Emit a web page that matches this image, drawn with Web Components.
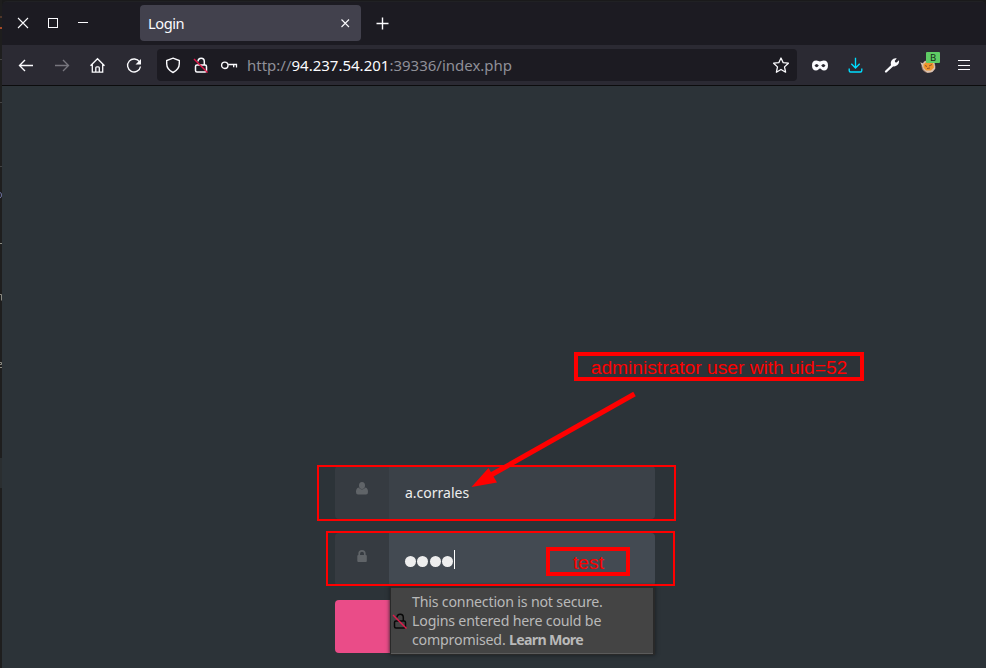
<!DOCTYPE html>
<html lang="en"><head><meta charset="utf-8"><title>Login</title>
<style>html,body{margin:0;width:986px;height:668px;overflow:hidden;background:#1c1c1c;font-family:"Noto Sans","Noto Sans CJK SC",sans-serif}</style>
</head><body><login-desktop></login-desktop>
<script>
const define=(name,css,html)=>customElements.define(name,class extends HTMLElement{
  constructor(){super();this.attachShadow({mode:'open'}).innerHTML='<style>'+css+'</style>'+html;}
});
const glyphs={
 close:'<path d="M3 3l10 10M13 3l-10 10" stroke-width="1.1"/>',
 max:'<path d="M3.5 3.500h9v9h-9z" shape-rendering="crispEdges"/>',
 min:'<path d="M3 7.5h10" shape-rendering="crispEdges"/>',
 tabclose:'<path d="M4.500 4.500l7.500 7.500M12 4.500l-7.500 7.500" stroke-width="1.1"/>',
 plus:'<path d="M8.500 2.500v12M2.500 8.500h12" stroke-width="1.400"/>',
 back:'<path d="M15 8.500H2M7 3L1.500 8.500 7 14" stroke-width="1.350"/>',
 forward:'<path d="M1 8.500h13M9 3l5.500 5.500L9 14" stroke-width="1.350"/>',
 home:'<path d="M.5 8.700L7.500 1.700l7 7M2.300 7.500v7.700h10.400V7.500M5.800 15v-4.200q0-1 1-1h1.500q1 0 1 1V15" stroke-width="1.300"/>',
 reload:'<path d="M13.600 5A6.500 6.500 0 1 0 14.500 9.500" stroke-width="1.400"/><path d="M15 2v5.500H9.500z" fill="currentColor" stroke="none"/>',
 shield:'<path d="M8 1.200l6.300 2.300v3.300c0 4-2.800 7-6.300 8.700-3.500-1.700-6.300-4.700-6.300-8.700V3.500z" stroke-width="1.400"/>',
 lock:'<rect x="2.500" y="8" width="11" height="7" rx="1.500" stroke-width="1.500"/><path d="M5 4.500C5.200 0 11.300 0 11.300 4.500V8" stroke-width="1.500"/><path d="M1 2L14.500 15.500" stroke="#e2194a" stroke-width="1.400"/>',
 key:'<circle cx="3.800" cy="8.300" r="3.200" stroke-width="1.400"/><path d="M7.200 7.500H15.500v3M12.700 7.500v2.800" stroke-width="1.300"/>',
 star:'<path d="M8 1l2.200 4.700 5.200.5-3.900 3.700 1.100 5.300L8 12.500 3.400 15.200l1.100-5.300L.6 6.200 5.800 5.700z" stroke-width="1.300" stroke-linejoin="round"/>',
 mask:'<path fill="currentColor" stroke="none" fill-rule="evenodd" d="M0 8.500C0 5 1.300 3.500 4.300 3.500c1.700 0 2.700 1 3.700 1s2-1 3.700-1c3 0 4.300 1.500 4.300 5 0 3.200-1.500 5-4 5-2.200 0-3-2-4-2s-1.800 2-4 2c-2.500 0-4-1.800-4-5zM2.500 8.600q2.200 3.400 4.300 0-2.200-3-4.300 0zM9.200 8.600q2.200 3.400 4.300 0-2.200-3-4.300 0z"/>',
 download:'<path d="M7.500 .8v10M3.300 6.700L7.500 11l4.200-4.300M1.200 11.500v2q0 1.500 1.300 1.500h10q1.300 0 1.300-1.500v-2" stroke-width="1.350"/>',
 wrench:'<path d="M2 14.500L9 7.800" stroke-width="2.300" stroke-linecap="round"/><path fill="currentColor" stroke="none" d="M7 8C6 4 9 .7 12.700 1.400L10.800 3.700l.3 1.500 1.500.3 2.400-2.200C15.700 7.300 12 10.500 8 9z"/>',
 menu:'<path d="M2 3.500h12M2 8.500h12M2 12.500h12" stroke-width="1.500" shape-rendering="crispEdges"/>',
 fox:'<ellipse cx="8.500" cy="9.500" rx="7" ry="6.500" fill="#9b7968" stroke="none"/><path d="M.3 5.300l3 1.200 1-2 4-1 6 2 1 6-3 3.500-5 .7-3.500-2.700z" fill="#d9c2b3" stroke="none"/><path d="M3.500 7.500l3-3 6.500 1 1 5-3 3H6L3.500 10.500z" fill="#ef952d" stroke="none"/><path d="M5 8.500l2 1M9 9l3-1.500M7 11.500l3-.5" stroke="#8d4825" stroke-width=".9"/>',
 user:'<ellipse cx="8" cy="4.600" rx="3" ry="3.500" fill="currentColor" stroke="none"/><path fill="currentColor" stroke="none" d="M4.500 6.500Q8 10.500 11.500 6.500 14 7.300 14 11q0 2.500-2 2.500H4q-2 0-2-2.500 0-3.700 2.500-4.500z"/>',
 padlock:'<rect x="3.300" y="7" width="9.500" height="7" rx="1" fill="currentColor" stroke="none"/><path d="M5.200 7.500V5.700a2.800 2.800 0 0 1 5.600 0v1.800" stroke-width="1.700"/>'
};
customElements.define('line-icon',class extends HTMLElement{
 constructor(){super();this.attachShadow({mode:'open'});}
 connectedCallback(){this.shadowRoot.innerHTML='<style>:host{display:block;flex:none;width:16px;height:16px}svg{display:block;width:100%;height:100%;overflow:visible}</style><svg viewBox="0 0 16 16" fill="none" stroke="currentColor">'+glyphs[this.getAttribute('name')]+'</svg>';}
});
define('browser-tabs',`:host{display:flex;box-sizing:border-box;height:44px;padding:4px 0 4px 13px;background:#1c1b22;border-top:1px solid #202124;border-radius:5px 5px 0 0;color:#fbfbfe}
.controls{display:flex;gap:14px;width:125px;padding-top:9px}.tab{box-sizing:border-box;width:221px;height:36px;margin-top:-1px;padding:0 8px;border-radius:4px;background:#42414d;display:flex;align-items:center;justify-content:space-between;font-size:14.67px;line-height:36px;letter-spacing:-.45px}.add{margin:9px 0 0 13px}`,
`<div class="controls"><line-icon name="close"></line-icon><line-icon name="max"></line-icon><line-icon name="min"></line-icon></div><div class="tab"><span><slot></slot></span><line-icon name="tabclose"></line-icon></div><line-icon class="add" name="plus"></line-icon>`);
define('browser-toolbar',`:host{display:flex;box-sizing:border-box;height:41px;padding:4px 14px 4px 16px;background:#2b2a33;border-bottom:1px solid #0c0c0d;color:#fbfbfe}
.nav{display:flex;gap:20px;padding-top:8px;width:139px}.dim{color:#77767e}.url{box-sizing:border-box;width:640px;height:32px;border-radius:4px;background:#1c1b22;display:flex;align-items:center;padding:0 8px;gap:12px}.address{font-size:15px;flex:1;color:#8f8f98;white-space:pre;margin-left:-2px}.address b{font-weight:400;color:#fbfbfe}.tools{display:flex;gap:20px;padding:8px 0 0 15px}.blue{color:#00ddff}.fox{position:relative}.badge{position:absolute;left:6px;top:-5px;width:14px;height:11px;border-radius:1px;background:#5fcb65;color:#172719;text-align:center;font-size:9.5px;line-height:11px}`,
`<div class="nav"><line-icon name="back"></line-icon><line-icon class="dim" name="forward"></line-icon><line-icon name="home"></line-icon><line-icon name="reload"></line-icon></div><div class="url"><line-icon name="shield"></line-icon><line-icon name="lock"></line-icon><line-icon name="key"></line-icon><span class="address">http://<b>94.237.54.201</b>:39336/index.php</span><line-icon name="star"></line-icon></div><div class="tools"><line-icon name="mask"></line-icon><line-icon class="blue" name="download"></line-icon><line-icon name="wrench"></line-icon><div class="fox"><line-icon name="fox"></line-icon><span class="badge">B</span></div><line-icon name="menu"></line-icon></div>`);
define('login-field',`:host{display:flex;width:320px;height:53px;border-radius:4px;overflow:hidden}.icon{width:54px;background:#363b41;color:#606468;display:flex;justify-content:center;padding-top:15px;box-sizing:border-box}.value{flex:1;background:var(--fill,#3b4148);padding-left:16px;color:#eee;display:flex;align-items:center;font-size:14px}`,
`<div class="icon"><slot name="icon"></slot></div><div class="value"><slot></slot></div>`);
define('password-dots',`:host{display:flex;align-items:center;gap:1.3px;padding-top:4px}.dot{width:11px;height:11px;border-radius:50%;background:#eee}.caret{width:1px;height:19px;background:#fff;margin-bottom:4px}`,
`<span class="dot"></span><span class="dot"></span><span class="dot"></span><span class="dot"></span><span class="caret"></span>`);
define('security-notice',`:host{position:absolute;z-index:1;left:390px;top:586px;width:265px;height:69px;box-sizing:border-box;border:1px solid #292929;border-top:2px solid #2b2b2b;border-right-width:2px;border-bottom-width:1px;background:#444;box-shadow:inset 0 -1px #5b5b5b,0 0 4px #171b1e;color:#b9b9b9;display:flex;align-items:center;font-size:14.2px;line-height:19px;white-space:nowrap}.lock{color:#080808;margin-left:1px}p{margin:0 0 2px 4px;letter-spacing:-.19px}b{letter-spacing:-.7px}`,
`<line-icon class="lock" name="lock"></line-icon><p>This connection is not secure.<br>Logins entered here could be<br>compromised. <b>Learn More</b></p>`);
define('login-page',`:host{display:block;height:583px;background:#2c3338}.form{display:flex;flex-direction:column;padding:380px 0 0 333px;gap:14px}.submit{width:320px;height:53px;border-radius:4px;background:#ea4c88;clip-path:inset(0 260px 0 0)}.active{--fill:#434a52}`,
`<div class="form"><login-field><line-icon slot="icon" name="user"></line-icon>a.corrales</login-field><login-field class="active"><line-icon slot="icon" name="padlock"></line-icon><password-dots></password-dots></login-field><div class="submit"></div></div>`);
define('review-notes',`:host{position:absolute;inset:0;z-index:2;pointer-events:none;color:#f00;font-family:"Liberation Sans",Arial,sans-serif}svg{position:absolute;inset:0}.note{position:absolute;box-sizing:border-box;border:4px solid #f00;white-space:nowrap;text-align:center;font-size:19.2px}.admin{left:574px;top:352px;width:290px;height:29px;line-height:23px}.test{left:546px;top:547px;width:84px;height:29px;line-height:24px;padding-left:1px}`,
`<svg width="986" height="668" fill="none" stroke="#f00" stroke-width="2"><rect x="318" y="466" width="357" height="54"/><rect x="327" y="532" width="347" height="53"/><path d="M634.500 394L491 475" stroke-width="5"/><path d="M471.500 487l17-19 8.500 14.500z" fill="#f00" stroke="none"/></svg><span class="note admin">administrator user with uid=52</span><span class="note test">test</span>`);
define('desktop-edge',`:host{display:block;position:relative;width:2px;height:668px;overflow:hidden;background:#1e1e1e}svg{display:block}`,
`<svg width="2" height="668" fill="none"><path d="M0 17h2" stroke="#824f36"/><path d="M0 28h2" stroke="#a44927" stroke-width="2"/><path d="M0 59.500h2M0 102.500h2M0 166.500h2" stroke="#444"/><path d="M0 192.500q1.500 0 1.500 2.500t-1.500 3" stroke="#6c729f"/><path d="M0 243.500h2M0 294.500h1.500v6M0 362.500h1.500v2H0M0 367.500h2" stroke="#8a8a82"/><path d="M0 458h2v30H0z" fill="#2a2e30"/></svg>`);
define('login-desktop',`:host{display:flex;position:relative;width:986px;height:668px;overflow:hidden}.window{width:984px;padding-top:1px;background:#1a1a1b;box-sizing:border-box}`,
`<desktop-edge></desktop-edge><div class="window"><browser-tabs>Login</browser-tabs><browser-toolbar></browser-toolbar><login-page></login-page></div><security-notice></security-notice><review-notes></review-notes>`);
</script></body></html>
